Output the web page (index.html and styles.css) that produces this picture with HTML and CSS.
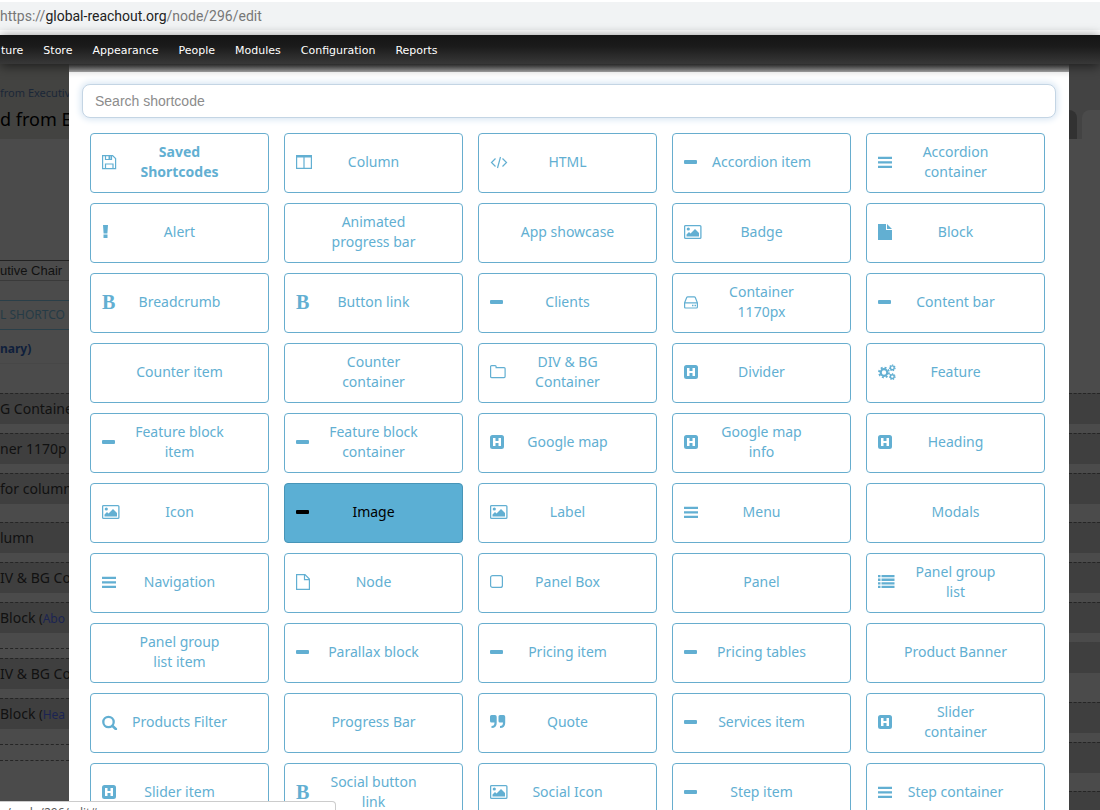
FILE: index.html
```html
<!DOCTYPE html>
<html lang="en">
  <head>
    <meta charset="UTF-8" />
    <meta name="viewport" content="width=device-width, initial-scale=1.0" />
    <title>Edit node | Global Reachout</title>
    <link rel="stylesheet" href="styles.css">
  </head>
  <body>
    <!-- icon set -->
    <svg class="sprite" aria-hidden="true">
      <symbol id="save" viewBox="0 0 20 16">
        <path d="M.6 1.600h10l3 3v10H.6zM3.500 14.500v-4.500h7.500v4.500M3.500 1.500v4h6v-4" fill="none" stroke="currentColor" stroke-width="1.200" />
        <path d="M6.500 2h2v3h-2z" fill="currentColor" />
      </symbol>
      <symbol id="columns" viewBox="0 0 20 16">
        <path d="M.6 2.500h14.800v11.900H.6zM8 2.500v12" fill="none" stroke="currentColor" stroke-width="1.200" />
        <path d="M0 1h16v2.500H0z" fill="currentColor" />
      </symbol>
      <symbol id="code" viewBox="0 0 20 16">
        <path d="M5.500 4.500 1.500 8.500l4 4M12.500 4.500l4 4-4 4M10.500 3l-3 11" fill="none" stroke="currentColor" stroke-width="1.200" />
      </symbol>
      <symbol id="minus" viewBox="0 0 20 16">
        <rect y="6" width="13" height="4" rx="1" fill="currentColor" />
      </symbol>
      <symbol id="bars" viewBox="0 0 20 16">
        <path d="M0 2.800h14v2.300H0zM0 7.300h14v2.300H0zM0 11.800h14v2.300H0z" fill="currentColor" />
      </symbol>
      <symbol id="alert" viewBox="0 0 20 16">
        <path d="M1 1h5l-.6 8.500H1.600zM1.500 10.500h4V14h-4z" fill="currentColor" />
      </symbol>
      <symbol id="picture" viewBox="0 0 20 16">
        <rect x=".600" y="1.600" width="16.300" height="12.800" rx="1" fill="none" stroke="currentColor" stroke-width="1.300" />
        <circle cx="4.300" cy="5" r="1.600" fill="currentColor" />
        <path d="M2.500 12.500v-2L5 8l1.500 1.500 4.500-4.500 4 4v3.500z" fill="currentColor" />
      </symbol>
      <symbol id="file" viewBox="0 0 20 16">
        <path d="M0 0h8v6h6v10H0zM9 0l5 5H9z" fill="currentColor" />
      </symbol>
      <symbol id="file-o" viewBox="0 0 20 16">
        <path d="M.6.6h8.400l4.400 4.400v10.400H.6zM8.500.6v5h5" fill="none" stroke="currentColor" stroke-width="1.200" />
      </symbol>
      <symbol id="hdd" viewBox="0 0 20 16">
        <path d="M.6 8.800 2.700 3.500q.3-.7 1-.7h6.600q.7 0 1 .7l2.100 5.300v4.200q0 1-1 1H1.600q-1 0-1-1zM.6 8.800h12.800" fill="none" stroke="currentColor" stroke-width="1.200" />
        <path d="M8 10.700h1.500v1.500H8zM10.500 10.700H12v1.500h-1.500z" fill="currentColor" />
      </symbol>
      <symbol id="folder" viewBox="0 0 20 16">
        <path d="M.6 2.600q0-1 1-1h3.500q1 0 1 1v1h8q1 0 1 1v8q0 1-1 1H1.600q-1 0-1-1z" fill="none" stroke="currentColor" stroke-width="1.200" />
      </symbol>
      <symbol id="h-square" viewBox="0 0 20 16">
        <path fill-rule="evenodd" d="M2.500 1h9Q14 1 14 3.500v9q0 2.500-2.500 2.500h-9Q0 15 0 12.500v-9Q0 1 2.500 1zM3 4v8h2.500V9h3v3H11V4H8.500v3h-3V4z" fill="currentColor" />
      </symbol>
      <symbol id="cogs" viewBox="0 0 20 16">
        <g fill="none" stroke="currentColor">
          <circle cx="6" cy="8.500" r="3.300" stroke-width="2.200" />
          <circle cx="6" cy="8.500" r="5" stroke-width="1.800" stroke-dasharray="1.960" />
          <circle cx="14.300" cy="3.800" r="1.900" stroke-width="1.400" />
          <circle cx="14.300" cy="3.800" r="2.800" stroke-width="1.200" stroke-dasharray="1.250" />
          <circle cx="14.300" cy="12.600" r="1.900" stroke-width="1.400" />
          <circle cx="14.300" cy="12.600" r="2.800" stroke-width="1.200" stroke-dasharray="1.250" />
        </g>
      </symbol>
      <symbol id="square" viewBox="0 0 20 16">
        <rect x=".600" y="1.600" width="11.800" height="11.800" rx="2" fill="none" stroke="currentColor" stroke-width="1.200" />
      </symbol>
      <symbol id="list" viewBox="0 0 20 16">
        <path d="M0 1h2.500v2.300H0zM0 4.600h2.500v2.300H0zM0 8.200h2.500v2.300H0zM0 11.800h2.500v2.300H0zM3.500 1h13v2.300h-13zM3.500 4.600h13v2.300h-13zM3.500 8.200h13v2.300h-13zM3.500 11.800h13v2.300h-13z" fill="currentColor" />
      </symbol>
      <symbol id="search" viewBox="0 0 20 16">
        <circle cx="6.500" cy="8" r="5.200" fill="none" stroke="currentColor" stroke-width="2.300" />
        <path d="m10.300 11.800 3.500 3.200" stroke="currentColor" stroke-width="2.600" stroke-linecap="round" />
      </symbol>
      <symbol id="quote" viewBox="0 0 20 16">
        <path d="M1.500 1H5q1.700 0 1.700 1.700V9Q6.700 14 1.500 14V12Q4.500 12 4.500 8.500h-3Q0 8.500 0 7V2.500Q0 1 1.500 1zM10 1h3.500q1.700 0 1.700 1.700V9q0 5-5.200 5V12q3 0 3-3.500h-3q-1.500 0-1.500-1.500V2.500Q8.500 1 10 1z" fill="currentColor" />
      </symbol>
    </svg>

    <div class="address"><div class="url">https://<b>global-reachout.org</b>/node/296/edit</div></div>

    <nav class="toolbar">
      <a href="#">ture</a>
      <a href="#">Store</a>
      <a href="#">Appearance</a>
      <a href="#">People</a>
      <a href="#">Modules</a>
      <a href="#">Configuration</a>
      <a href="#">Reports</a>
    </nav>

    <div class="page">
      <!-- page under the dialog, left side -->
      <div class="under">
        <div class="branding">
          <a class="crumb" href="#">from Executiv</a>
          <h1>d from E</h1>
        </div>
        <div class="field">utive Chair</div>
        <div class="add">L SHORTCO</div>
        <div class="summary">nary)</div>
        <div class="row">G Containe</div>
        <div class="row">ner 1170p</div>
        <div class="row last">for column</div>
        <div class="row">lumn</div>
        <div class="row">IV &amp; BG Co</div>
        <div class="row">Block <small>(<a href="#">Abo</a></small></div>
        <div class="end"></div>
        <div class="row">IV &amp; BG Co</div>
        <div class="row">Block <small>(<a href="#">Hea</a></small></div>
        <div class="end"></div>
        <div class="end"></div>
      </div>

      <main class="dialog">
        <input class="search" type="text" placeholder="Search shortcode" aria-label="Search shortcode" />
        <div class="tiles">
          <button class="tile saved"><svg><use href="#save" /></svg><span>Saved<br>Shortcodes</span></button>
          <button class="tile"><svg><use href="#columns" /></svg><span>Column</span></button>
          <button class="tile"><svg><use href="#code" /></svg><span>HTML</span></button>
          <button class="tile"><svg><use href="#minus" /></svg><span>Accordion item</span></button>
          <button class="tile"><svg><use href="#bars" /></svg><span>Accordion<br>container</span></button>

          <button class="tile"><svg><use href="#alert" /></svg><span>Alert</span></button>
          <button class="tile"><i></i><span>Animated<br>progress bar</span></button>
          <button class="tile"><i></i><span>App showcase</span></button>
          <button class="tile"><svg><use href="#picture" /></svg><span>Badge</span></button>
          <button class="tile"><svg><use href="#file" /></svg><span>Block</span></button>

          <button class="tile"><i>B</i><span>Breadcrumb</span></button>
          <button class="tile"><i>B</i><span>Button link</span></button>
          <button class="tile"><svg><use href="#minus" /></svg><span>Clients</span></button>
          <button class="tile"><svg><use href="#hdd" /></svg><span>Container<br>1170px</span></button>
          <button class="tile"><svg><use href="#minus" /></svg><span>Content bar</span></button>

          <button class="tile"><i></i><span>Counter item</span></button>
          <button class="tile"><i></i><span>Counter<br>container</span></button>
          <button class="tile"><svg><use href="#folder" /></svg><span>DIV &amp; BG<br>Container</span></button>
          <button class="tile"><svg><use href="#h-square" /></svg><span>Divider</span></button>
          <button class="tile"><svg><use href="#cogs" /></svg><span>Feature</span></button>

          <button class="tile"><svg><use href="#minus" /></svg><span>Feature block<br>item</span></button>
          <button class="tile"><svg><use href="#minus" /></svg><span>Feature block<br>container</span></button>
          <button class="tile"><svg><use href="#h-square" /></svg><span>Google map</span></button>
          <button class="tile"><svg><use href="#h-square" /></svg><span>Google map<br>info</span></button>
          <button class="tile"><svg><use href="#h-square" /></svg><span>Heading</span></button>

          <button class="tile"><svg><use href="#picture" /></svg><span>Icon</span></button>
          <button class="tile active"><svg><use href="#minus" /></svg><span>Image</span></button>
          <button class="tile"><svg><use href="#picture" /></svg><span>Label</span></button>
          <button class="tile"><svg><use href="#bars" /></svg><span>Menu</span></button>
          <button class="tile"><i></i><span>Modals</span></button>

          <button class="tile"><svg><use href="#bars" /></svg><span>Navigation</span></button>
          <button class="tile"><svg><use href="#file-o" /></svg><span>Node</span></button>
          <button class="tile"><svg><use href="#square" /></svg><span>Panel Box</span></button>
          <button class="tile"><i></i><span>Panel</span></button>
          <button class="tile"><svg><use href="#list" /></svg><span>Panel group<br>list</span></button>

          <button class="tile"><i></i><span>Panel group<br>list item</span></button>
          <button class="tile"><svg><use href="#minus" /></svg><span>Parallax block</span></button>
          <button class="tile"><svg><use href="#minus" /></svg><span>Pricing item</span></button>
          <button class="tile"><svg><use href="#minus" /></svg><span>Pricing tables</span></button>
          <button class="tile"><i></i><span>Product Banner</span></button>

          <button class="tile"><svg><use href="#search" /></svg><span>Products Filter</span></button>
          <button class="tile"><i></i><span>Progress Bar</span></button>
          <button class="tile"><svg><use href="#quote" /></svg><span>Quote</span></button>
          <button class="tile"><svg><use href="#minus" /></svg><span>Services item</span></button>
          <button class="tile"><svg><use href="#h-square" /></svg><span>Slider<br>container</span></button>

          <button class="tile"><svg><use href="#h-square" /></svg><span>Slider item</span></button>
          <button class="tile"><i>B</i><span>Social button<br>link</span></button>
          <button class="tile"><svg><use href="#picture" /></svg><span>Social Icon</span></button>
          <button class="tile"><svg><use href="#minus" /></svg><span>Step item</span></button>
          <button class="tile"><svg><use href="#bars" /></svg><span>Step container</span></button>
        </div>
      </main>

      <!-- right side -->
      <div class="under right">
        <div class="tabs"><div></div><div></div></div>
        <div class="row"></div>
        <div class="row"></div>
        <div class="row last"></div>
        <div class="row"></div>
        <div class="row"></div>
        <div class="row"></div>
        <div class="row plain"></div>
        <div class="row"></div>
        <div class="row last"></div>
        <div class="row"></div>
      </div>
    </div>

    <div class="status">g/node/296/edit#</div>
  </body>
</html>
```
FILE: styles.css
```css
body {
  margin: 0;
  height: 100vh;
  display: flex;
  flex-direction: column;
  overflow: hidden;
  background: #4b4b4b;
  font-family: "Noto Sans", "Open Sans", sans-serif;
}

a {
  text-decoration: none;
}

.sprite {
  display: none;
}

/* browser address bar */
.address {
  padding: 2px 0 5px;
  background: white;
}

.url {
  height: 28px;
  line-height: 29px;
  background: #f1f3f4;
  color: #777;
  font-family: Roboto, sans-serif;
  font-size: 14px;
}

.url b {
  font-weight: normal;
  color: #222;
}

/* admin toolbar */
.toolbar {
  position: relative;
  z-index: 2;
  display: flex;
  gap: 20px;
  height: 29px;
  padding-left: 1px;
  line-height: 31px;
  background: linear-gradient(#141414, #1b1b1b 40%, #383838);
  box-shadow: 0 2px 12px rgba(0, 0, 0, 0.6);
}

.toolbar a {
  color: white;
  font-family: "DejaVu Sans", sans-serif;
  font-size: 11px;
}

.page {
  flex: 1;
  min-height: 0;
  display: grid;
  grid-template-columns: 69px 1fr 31px;
}

/* dimmed page */
.under {
  overflow: hidden;
  white-space: nowrap;
  color: #111;
  font-size: 14px;
}

.branding {
  box-sizing: border-box;
  height: 75px;
  padding-top: 20px;
  background: #434341;
}

.crumb {
  display: block;
  line-height: 18px;
  color: #1b2738;
  font-size: 11px;
}

.branding h1 {
  margin: 0;
  line-height: 34px;
  color: black;
  font-size: 18px;
  font-weight: normal;
}

.field {
  margin-top: 121px;
  height: 19px;
  line-height: 20px;
  border-top: 1px solid #222;
  border-bottom: 1px solid #3a3a3a;
  font-family: "Liberation Sans", sans-serif;
  font-size: 13px;
}

.add {
  margin-top: 19px;
  height: 28px;
  line-height: 28px;
  border: solid #2a3f49;
  border-width: 1px 0;
  color: #263b46;
  font-size: 12px;
}

.summary {
  height: 33px;
  margin-bottom: 29px;
  line-height: 38px;
  border-bottom: 1px solid #474747;
  color: #0f1f3c;
  font-size: 12px;
  font-weight: bold;
}

.row {
  height: 30px;
  margin-bottom: 9px;
  line-height: 29px;
  border-top: 1px dashed #252525;
  background: #3f3f3f;
}

.row.last {
  margin-bottom: 18px;
}

.row.plain {
  margin-bottom: 29px;
  border-top-color: #3f3f3f;
}

.row small {
  font-size: 12px;
}

.row a {
  color: #1b2452;
}

.end {
  height: 9px;
  margin-top: 15px;
  border-top: 1px dashed #252525;
}

.end + .end {
  margin-top: 6px;
}

/* page tabs, cut off by the dialog */
.tabs {
  display: flex;
  align-items: flex-end;
  gap: 5px;
  height: 75px;
  margin-bottom: 254px;
  background: #434343;
}

.tabs div {
  flex: 1;
  height: 29px;
  border-top-left-radius: 8px;
  background: #4b4b4b;
}

.tabs div:first-child {
  flex: 0 0 8px;
  border-radius: 0 8px 0 0;
  background: #323232;
}

/* shortcode dialog */
.dialog {
  overflow: hidden;
  background: white;
}

.dialog::before {
  content: "";
  display: block;
  height: 8px;
  background: linear-gradient(#444, #aaa);
}

.search {
  display: block;
  box-sizing: border-box;
  width: calc(100% - 26px);
  height: 34px;
  margin: 12px 13px 15px;
  padding: 0 12px;
  border: 1px solid #c4d5e4;
  border-radius: 8px;
  box-shadow: 0 0 6px 2px #dbe8f4;
  font-family: "Liberation Sans", sans-serif;
  font-size: 14px;
}

.search::placeholder {
  color: #8c8c8c;
}

.tiles {
  display: grid;
  grid-template-columns: repeat(5, 1fr);
  gap: 10px 15px;
  padding: 0 24px 0 21px;
}

.tile {
  display: grid;
  grid-template-columns: 20px 1fr 20px;
  align-items: center;
  height: 60px;
  padding: 0 11px 2px;
  border: 1px solid #67adce;
  border-radius: 4px;
  background: white;
  color: #62afd2;
  font-family: inherit;
  font-size: 14px;
  line-height: 20px;
  white-space: nowrap;
  cursor: pointer;
}

.tile svg {
  width: 20px;
  height: 16px;
}

.tile i {
  font: bold 20px "Liberation Serif", serif;
  text-align: left;
}

.tile.saved span {
  font-weight: bold;
}

.tile:hover,
.tile.active {
  border-color: #4795b8;
  background: #5bafd4;
  color: black;
}

/* link preview at the bottom of the window */
.status {
  position: fixed;
  z-index: 3;
  left: 0;
  bottom: -14px;
  width: 335px;
  height: 21px;
  line-height: 22px;
  border: 1px solid #ccc;
  border-left: 0;
  border-top-right-radius: 4px;
  background: white;
  color: #555;
  font-family: "Open Sans", sans-serif;
  font-size: 12px;
}
```
